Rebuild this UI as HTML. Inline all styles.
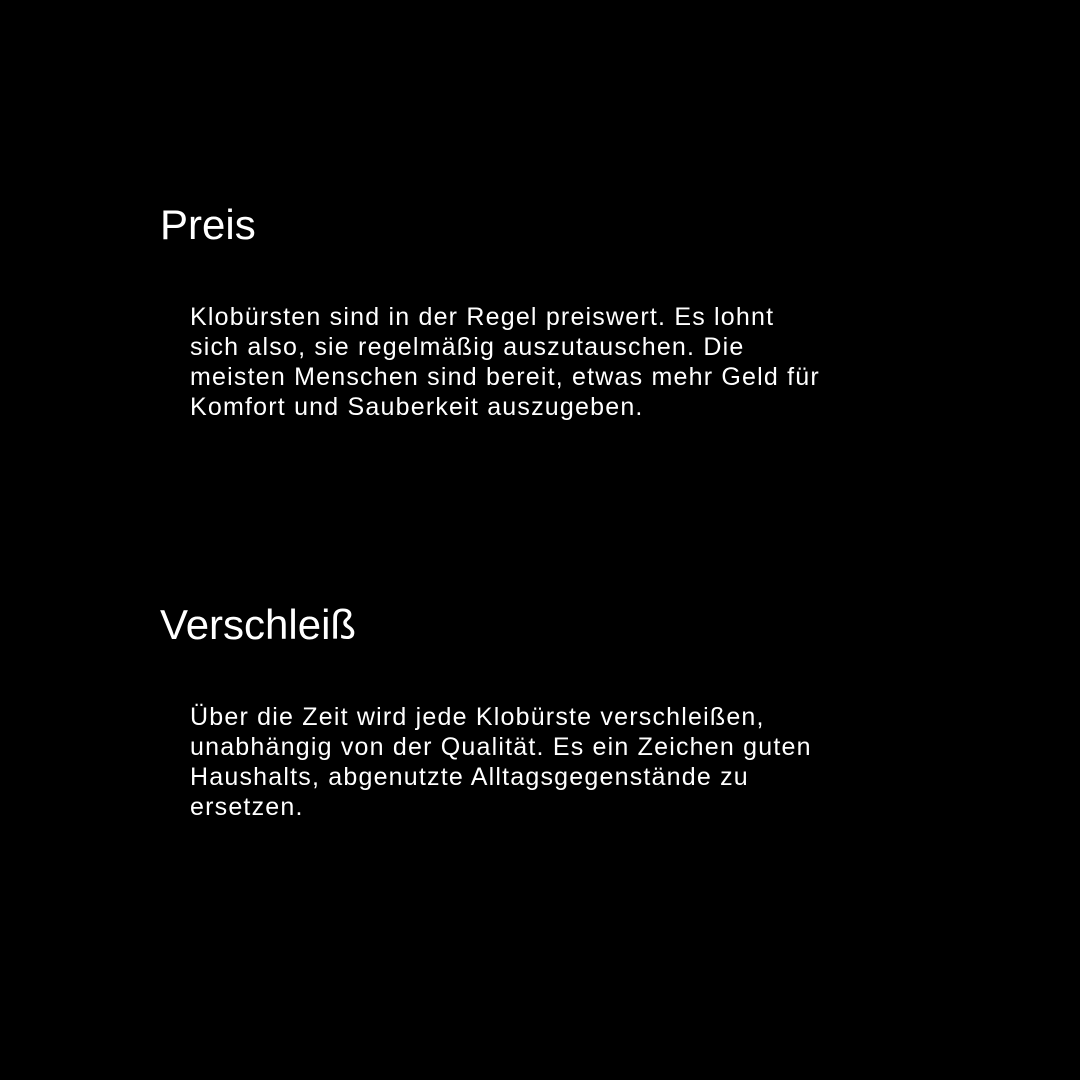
<!DOCTYPE html>
<html><head><meta charset="utf-8"><style>
html,body{margin:0;padding:0;background:#000;width:1080px;height:1080px;overflow:hidden}
div{position:absolute;color:#fff;font-family:"Liberation Sans",sans-serif;white-space:nowrap}
.h{left:160px;font-size:42px;line-height:42px;letter-spacing:0px}
.b{left:190px;font-size:25px;line-height:30px;letter-spacing:1.2px}
</style></head><body>
<div class="h" style="top:204px">Preis</div>
<div class="b" style="top:302px">Klobürsten sind in der Regel preiswert. Es lohnt<br>sich also, sie regelmäßig auszutauschen. Die<br>meisten Menschen sind bereit, etwas mehr Geld für<br>Komfort und Sauberkeit auszugeben.</div>
<div class="h" style="top:604px">Verschleiß</div>
<div class="b" style="top:702px">Über die Zeit wird jede Klobürste verschleißen,<br>unabhängig von der Qualität. Es ein Zeichen guten<br>Haushalts, abgenutzte Alltagsgegenstände zu<br>ersetzen.</div>
</body></html>
